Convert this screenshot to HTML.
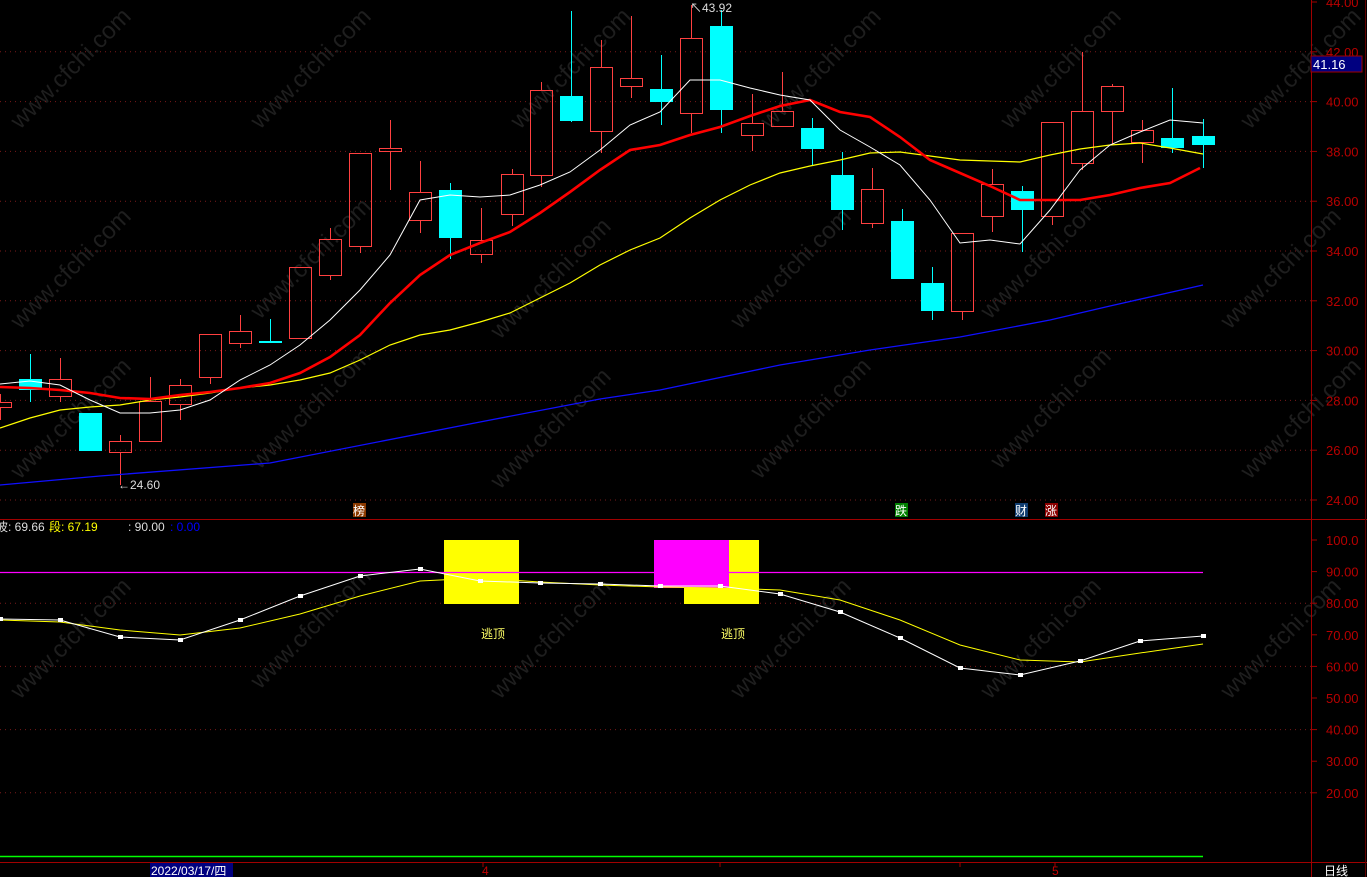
<!DOCTYPE html>
<html><head><meta charset="utf-8"><style>
html,body{margin:0;padding:0;background:#000;width:1367px;height:877px;overflow:hidden}
svg{display:block}
text{font-family:"Liberation Sans","Noto Sans CJK SC",sans-serif}
</style></head><body>
<svg id="s" width="1367" height="877" viewBox="0 0 1367 877" xmlns="http://www.w3.org/2000/svg">
<rect width="1367" height="877" fill="#000"/>
<g id="wm" fill="#1e1e1e" font-size="24"></g>
<g id="grid"></g>
<g id="candles"></g>
<g id="lines" fill="none"></g>
<g id="lower"></g>
<g id="axis"></g>
</svg>
<script>
const NS="http://www.w3.org/2000/svg";
function el(p,t,a,txt){const e=document.createElementNS(NS,t);for(const k in a)e.setAttribute(k,a[k]);if(txt!==undefined)e.textContent=txt;document.getElementById(p).appendChild(e);return e;}
[[20,130],[260,130],[520,130],[770,130],[1010,130],[1250,130],[20,330],[260,320],[500,340],[740,330],[990,320],[1230,330],[20,480],[260,470],[500,490],[760,480],[1000,470],[1250,480],[20,700],[260,690],[500,700],[740,700],[990,700],[1230,700]].forEach(([x,y])=>{el("wm","text",{x:x,y:y,transform:`rotate(-45 ${x} ${y})`},"www.cfchi.com")});
for(let p=24;p<=44;p+=2){const y=500-(p-24)*24.9;if(p<44)el("grid","line",{x1:0,x2:1311,y1:y,y2:y,stroke:"#7a1a1a","stroke-dasharray":"1 4"});}
[80,60,40,20].forEach(v=>{const y=540+(100-v)*3.16;el("grid","line",{x1:0,x2:1311,y1:y,y2:y,stroke:"#7a1a1a","stroke-dasharray":"1 4"})});
const C=[[0,402,407,394,420,1],[30,379,390,354,402,0],[60,379,396,358,402,1],[90,413,451,413,451,0],[120,441,452,435,485,1],[150,401,441,377,441,1],[180,385,404,379,420,1],[210,334,377,334,384,1],[240,331,343,315,348,1],[270,341,343,319,343,0],[300,267,338,267,338,1],[330,239,275,228,280,1],[360,153,246,153,253,1],[390,148,151,120,190,1],[420,192,220,161,233,1],[450,190,238,183,259,0],[481,240,254,208,263,1],[512,174,214,169,226,1],[541,90,175,82,187,1],[571,96,121,11,122,0],[601,67,131,40,153,1],[631,78,86,16,98,1],[661,89,102,55,125,0],[691,38,113,5,133,1],[721,26,110,10,133,0],[752,123,135,94,151,1],[782,111,126,72,126,1],[812,128,149,118,166,0],[842,175,210,152,230,0],[872,189,223,168,228,1],[902,221,279,209,279,0],[932,283,311,267,320,0],[962,233,311,233,320,1],[992,184,216,169,232,1],[1022,191,210,186,252,0],[1052,122,216,122,225,1],[1082,111,163,52,170,1],[1112,86,111,84,144,1],[1142,130,142,120,163,1],[1172,138,148,88,153,0],[1203,136,145,119,168,0]];
C.forEach(([x,t,b,h,l,u])=>{const col=u?"#ff4040":"#00ffff";
 el("candles","line",{x1:x+.5,x2:x+.5,y1:h,y2:t,stroke:col});
 el("candles","line",{x1:x+.5,x2:x+.5,y1:b,y2:l,stroke:col});
 if(u)el("candles","rect",{x:x-10.5,y:t+.5,width:22,height:Math.max(b-t,1),fill:"none",stroke:col});
 else el("candles","rect",{x:x-11,y:t,width:23,height:Math.max(b-t,2),fill:col});
});
function pl(pts,col,w){el("lines","polyline",{points:pts.map(p=>p.join(",")).join(" "),stroke:col,"stroke-width":w});}
pl([[0,485],[100,476],[270,463],[480,422],[600,399],[660,390],[780,365],[870,350],[960,337],[1050,320],[1110,306],[1203,285]],"#1010ff",1.3);
pl([[0,428],[30,418],[60,410],[90,407],[120,405],[150,400],[180,397],[210,393],[240,388],[270,385],[300,380],[330,373],[360,360],[390,345],[420,335],[450,330],[480,322],[510,313],[540,298],[570,283],[600,265],[630,250],[660,238],[690,218],[720,200],[750,185],[780,173],[810,166],[840,160],[870,153],[900,152],[930,156],[960,160],[990,161],[1020,162],[1050,155],[1080,149],[1110,145],[1140,143],[1170,148],[1203,154]],"#ffff00",1.2);
pl([[0,387],[30,388],[60,390],[90,393],[120,398],[150,399],[180,395],[210,392],[240,388],[270,383],[300,373],[330,357],[360,335],[390,303],[420,275],[450,255],[480,243],[510,232],[540,213],[570,192],[600,170],[630,150],[660,145],[690,135],[720,127],[750,116],[780,106],[810,100],[840,112],[870,117],[900,137],[930,160],[960,173],[990,186],[1020,200],[1050,200],[1080,200],[1110,195],[1140,188],[1170,183],[1200,168]],"#ff0000",2.6);
pl([[0,384],[30,381],[60,385],[90,400],[120,413],[150,413],[180,410],[210,400],[240,380],[270,365],[300,345],[330,320],[360,290],[390,255],[420,200],[450,195],[480,197],[510,195],[540,185],[570,172],[600,150],[630,125],[660,112],[690,80],[720,80],[750,88],[780,95],[810,100],[840,130],[870,147],[900,165],[930,200],[960,243],[990,240],[1020,244],[1050,210],[1080,170],[1110,145],[1140,132],[1170,120],[1203,123]],"#ffffff",1);
el("lines","text",{x:118,y:489,fill:"#ddd","font-size":12,stroke:"none"},"←24.60");
el("lines","text",{x:690,y:12,fill:"#ddd","font-size":12,stroke:"none"},"↖43.92");
[[353,"#8b3a00","榜"],[895,"#008000","跌"],[1015,"#103d70","财"],[1045,"#8b0000","涨"]].forEach(([x,c,t])=>{el("lines","rect",{x:x,y:503,width:13,height:14,fill:c,stroke:"none"});el("lines","text",{x:x,y:515,fill:"#fff","font-size":12,stroke:"none"},t);});
el("axis","line",{x1:0,x2:1367,y1:519.5,y2:519.5,stroke:"#a00000"});
el("axis","line",{x1:0,x2:1367,y1:862.5,y2:862.5,stroke:"#a00000"});
el("axis","line",{x1:1311.5,x2:1311.5,y1:0,y2:877,stroke:"#a00000"});
el("axis","line",{x1:1365.5,x2:1365.5,y1:0,y2:877,stroke:"#600000"});
for(let p=24;p<=44;p+=2){const y=500-(p-24)*24.9;el("axis","line",{x1:1311,x2:1317,y1:y,y2:y,stroke:"#a00000"});el("axis","text",{x:1326,y:y+5,fill:"#b80000","font-size":13},p.toFixed(2));}
for(let v=100;v>=20;v-=10){const y=540+(100-v)*3.16;el("axis","line",{x1:1311,x2:1317,y1:y,y2:y,stroke:"#a00000"});el("axis","text",{x:1326,y:y+5,fill:"#b80000","font-size":13},v==100?"100.0":v.toFixed(2));}
el("axis","rect",{x:1311,y:56,width:51,height:16,fill:"#000080",stroke:"#a00000"});
el("axis","text",{x:1313,y:69,fill:"#fff","font-size":13},"41.16");
el("lower","text",{x:-4,y:531,fill:"#ddd","font-size":12},"波: 69.66");
el("lower","text",{x:49,y:531,fill:"#ffff00","font-size":12},"段: 67.19");
el("lower","text",{x:128,y:531,fill:"#ddd","font-size":12},": 90.00");
el("lower","text",{x:170,y:531,fill:"#0000ff","font-size":12},": 0.00");
el("lower","rect",{x:444,y:540,width:75,height:64,fill:"#ffff00"});
el("lower","rect",{x:684,y:540,width:75,height:64,fill:"#ffff00"});
el("lower","line",{x1:0,x2:1203,y1:572.5,y2:572.5,stroke:"#ff00ff","stroke-width":1.2});
el("lower","rect",{x:654,y:540,width:75,height:48,fill:"#ff00ff"});
el("lower","text",{x:481,y:638,fill:"#ffff66","font-size":12},"逃顶");
el("lower","text",{x:721,y:638,fill:"#ffff66","font-size":12},"逃顶");
const Y=[[0,620],[60,622],[120,630],[180,635],[240,628],[300,614],[360,596],[420,581],[480,578],[540,582],[600,585],[660,587],[720,588],[780,590],[840,600],[900,620],[960,645],[1020,660],[1080,662],[1140,653],[1203,644]];
const W=[[0,619],[60,620],[120,637],[180,640],[240,620],[300,596],[360,576],[420,569],[480,581],[540,583],[600,584],[660,586],[720,586],[780,594],[840,612],[900,638],[960,668],[1020,675],[1080,661],[1140,641],[1203,636]];
el("lower","polyline",{points:Y.map(p=>p.join(",")).join(" "),stroke:"#ffff00",fill:"none"});
el("lower","polyline",{points:W.map(p=>p.join(",")).join(" "),stroke:"#fff",fill:"none"});
W.forEach(([x,y])=>el("lower","rect",{x:x-2,y:y-2,width:5,height:4,fill:"#fff"}));
el("lower","line",{x1:0,x2:1203,y1:856.5,y2:856.5,stroke:"#00ff00","stroke-width":1.5});
el("lower","rect",{x:150,y:863,width:83,height:14,fill:"#000080"});
el("lower","text",{x:151,y:875,fill:"#fff","font-size":12},"2022/03/17/四");
el("lower","text",{x:482,y:875,fill:"#c00000","font-size":12},"4");
el("lower","text",{x:1052,y:875,fill:"#c00000","font-size":12},"5");
el("lower","text",{x:1324,y:875,fill:"#fff","font-size":12},"日线");
[483,720,960,1055].forEach(x=>el("lower","line",{x1:x,x2:x,y1:863,y2:867,stroke:"#a00000"}));
</script>
</body></html>
